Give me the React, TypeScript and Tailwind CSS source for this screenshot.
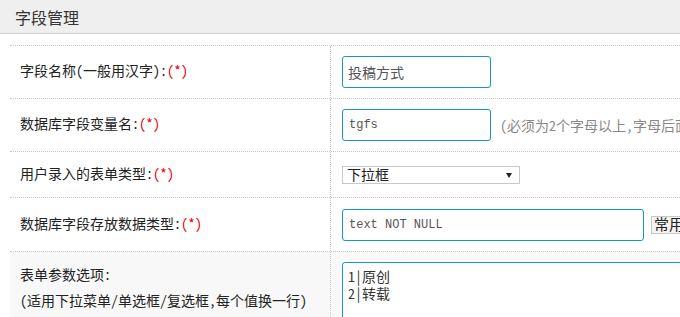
import React from "react";

const cjk = { fontFamily: '"Noto Sans Mono CJK SC", "Noto Sans CJK SC", "Noto Sans", sans-serif' };
const mono = { fontFamily: '"Liberation Mono", "Noto Sans CJK SC", monospace' };

function Star() {
  return <span className="text-[#e00]">(*)</span>;
}

export default function App() {
  return (
    <div className="w-[680px] h-[317px] overflow-hidden bg-white text-[14px] text-[#222]" style={cjk}>
      <div className="h-[34px] bg-[#efefef] border-b border-[#d2d2d2] flex items-center pl-[15px] text-[16px] text-[#333]">
        字段管理
      </div>
      <div className="mt-[11px] ml-[10px] w-[800px]">
        <div className="flex h-[53px] border-t border-dotted border-[#c8c8c8]">
          <div className="w-[320px] flex items-center pl-[10px] pb-[3px]">
            字段名称(一般用汉字):<Star />
          </div>
          <div className="flex-1 flex items-center pl-[11px] border-l border-dotted border-[#c8c8c8]">
            <div className="w-[149px] h-[32px] border border-[#1598c4] rounded-[3px] flex items-center pl-[5px] text-[14px] text-[#555]">
              投稿方式
            </div>
          </div>
        </div>
        <div className="flex h-[53px] border-t border-dotted border-[#c8c8c8]">
          <div className="w-[320px] flex items-center pl-[10px] pb-[3px]">
            数据库字段变量名:<Star />
          </div>
          <div className="flex-1 flex items-center pl-[11px] border-l border-dotted border-[#c8c8c8]">
            <div className="w-[149px] h-[32px] border border-[#1598c4] rounded-[3px] flex items-center pl-[6px] text-[12px] text-[#555]" style={mono}>
              tgfs
            </div>
            <span className="ml-[9px] text-[#888]">(必须为2个字母以上,字母后面可以加数字)</span>
          </div>
        </div>
        <div className="flex h-[46px] border-t border-dotted border-[#c8c8c8]">
          <div className="w-[320px] flex items-center pl-[10px] pb-[3px]">
            用户录入的表单类型:<Star />
          </div>
          <div className="flex-1 flex items-center pl-[11px] border-l border-dotted border-[#c8c8c8]">
            <div className="relative w-[178px] h-[18px] border border-[#c8c8c8] flex items-center pl-[4px] text-[14px] text-[#222]">
              下拉框
              <svg className="absolute right-[7px] top-[6px]" width="6" height="5" viewBox="0 0 6 5">
                <path d="M0 0 H6 L3 5 Z" fill="#222" />
              </svg>
            </div>
          </div>
        </div>
        <div className="flex h-[54px] border-t border-dotted border-[#c8c8c8]">
          <div className="w-[320px] flex items-center pl-[10px] pb-[3px]">
            数据库字段存放数据类型:<Star />
          </div>
          <div className="flex-1 flex items-center pl-[11px] border-l border-dotted border-[#c8c8c8]">
            <div className="w-[302px] h-[32px] border border-[#1598c4] rounded-[3px] flex items-center pl-[6px] text-[12px] text-[#555]" style={mono}>
              text NOT NULL
            </div>
            <div className="ml-[7px] h-[18px] px-[2px] border border-[#c8c8c8] bg-[#f4f4f4] flex items-center text-[15px] text-[#222]">
              常用类型
            </div>
          </div>
        </div>
        <div className="flex h-[80px] border-t border-dotted border-[#c8c8c8] bg-[#f8f8f8]">
          <div className="w-[320px] pl-[10px] pt-[9px] leading-[26px]">
            <div>表单参数选项:</div>
            <div>(适用下拉菜单/单选框/复选框,每个值换一行)</div>
            <div>如:1|男</div>
          </div>
          <div className="flex-1 pl-[11px] pt-[10px] border-l border-dotted border-[#c8c8c8]">
            <div className="w-[400px] h-[100px] border border-[#1598c4] rounded-[3px] bg-white pl-[5px] pt-[5px] text-[14px] leading-[17px] text-[#333]">
              <div>1|原创</div>
              <div>2|转载</div>
            </div>
          </div>
        </div>
      </div>
    </div>
  );
}
